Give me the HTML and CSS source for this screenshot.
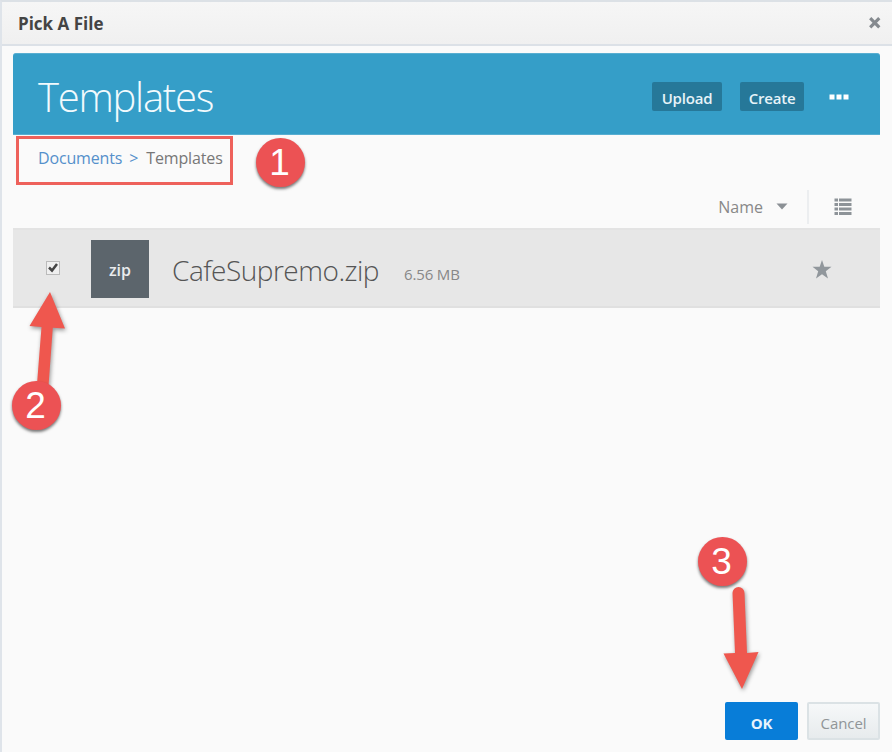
FILE: index.html
```html
<!DOCTYPE html>
<html lang="en">
<head>
<meta charset="utf-8">
<title>Pick A File</title>
<link rel="stylesheet" href="styles.css">
</head>
<body>
<div class="dialog">
  <header class="titlebar">
    <h1 class="title"><span>Pick A File</span></h1>
    <svg class="close" width="14" height="14" viewBox="0 0 14 14"><path d="M2.2 2.2 11.3 11.3M11.3 2.2 2.2 11.3"/></svg>
  </header>
  <main class="content">
    <section class="banner">
      <h2 class="heading"><span>Templates</span></h2>
      <button class="action upload"><span>Upload</span></button>
      <button class="action create"><span>Create</span></button>
      <svg class="more" width="20" height="6" viewBox="0 0 20 6"><path d="M.5.5h5v5h-5zM7.5.5h5v5h-5zM14.500.5h5v5h-5z"/></svg>
    </section>
    <nav class="crumbs"><a class="link"><span>Documents</span></a><span class="sep">&gt;</span><span class="current">Templates</span></nav>
    <div class="tools">
      <span class="sort">Name</span>
      <svg class="caret" width="12" height="7" viewBox="0 0 12 7"><path d="M.5.5h11L6 6.500z"/></svg>
      <span class="divider"></span>
      <svg class="list" width="18" height="18" viewBox="0 0 18 18"><path d="M.5 2H4M5 2h12.500M.5 6.500H4M5 6.500h12.500M.5 11H4M5 11h12.500M.5 15.500H4M5 15.500h12.500"/></svg>
    </div>
    <div class="row">
      <svg class="check" width="14" height="14" viewBox="0 0 14 14"><rect x=".5" y=".5" width="13" height="13"/><path d="M3 6.500 6 9.500 11 3"/></svg>
      <div class="thumb"><span>zip</span></div>
      <span class="name">CafeSupremo.zip</span>
      <span class="size">6.56 MB</span>
      <svg class="star" width="20" height="19" viewBox="0 0 20 19"><path d="M10 0l2.300 6.800H19.500l-5.700 4.400 2.200 7.300L10 14.200 4 18.500l2.200-7.300L.5 6.800h7.200z"/></svg>
    </div>
  </main>
  <footer class="footer">
    <button class="btn ok"><span>OK</span></button>
    <button class="btn cancel"><span>Cancel</span></button>
  </footer>
</div>
<div class="frame"></div>
<svg class="arrow" width="892" height="752" viewBox="0 0 892 752">
  <path d="M50 292 65 328.500 52.800 327.800 48.500 386 37 384 41.500 327 29.500 326z"/>
  <path d="M732.500 593a6 6 0 0 1 12 0L747 653l11.500-1L742 689 723.500 653.500 735 653z"/>
</svg>
<div class="badge one">1</div>
<div class="badge two">2</div>
<div class="badge three">3</div>
</body>
</html>
```

FILE: styles.css
```css
* { box-sizing: border-box; }
body { margin: 0; width: 892px; height: 752px; overflow: hidden; font-family: "Open Sans", "Noto Sans", sans-serif; background: #fafafa; }
h1, h2 { margin: 0; }
button { border: 0; padding: 0; font-family: inherit; }
span { white-space: nowrap; }
.dialog { height: 752px; display: flex; flex-direction: column; border-left: 2px solid #dfe4ea; border-top: 2px solid #dce1e6; }
.titlebar { height: 44px; display: flex; align-items: center; justify-content: space-between; padding: 0 10px 0 16px; background: linear-gradient(#f6f6f6, #f0f0f0); border-bottom: 2px solid #dce1e7; }
.title { font-size: 17px; line-height: 20px; font-weight: 700; color: #444; padding-top: 2px; }
.close { stroke: #858a8f; stroke-width: 3.200; }
.content { flex: 1; padding: 7px 12px 0 11px; }
.banner { height: 82px; display: flex; align-items: center; background: #359ec8; border-radius: 3px 3px 0 0; padding: 0 31px 0 25px; border: 1px solid #58aed1; border-left-width: 0; border-right-width: 0; }
.heading { flex: 1; font-size: 40px; letter-spacing: -1.250px; line-height: 50px; font-weight: 300; color: #f2fafd; padding-top: 5px; }
.action { height: 29px; padding-top: 3px; margin-top: 5px; border-radius: 2px; background: #267899; color: #e6f3f8; font-size: 15px; letter-spacing: -.2px; line-height: 20px; font-weight: 600; }
.upload { width: 70px; margin-right: 18px; }
.create { width: 64px; margin-right: 25px; }
.more { fill: #fff; margin-top: 5px; }
.crumbs { height: 50px; padding: 12px 0 0 25px; display: flex; font-size: 16px; letter-spacing: -.15px; line-height: 22px; color: #777; }
.link, .sep { color: #5590cb; }
.sep { margin: 0 8px 0 7px; }
.tools { height: 43px; display: flex; align-items: center; justify-content: flex-end; padding-right: 28px; color: #888; font-size: 16px; line-height: 22px; }
.sort { margin-right: 13px; padding-top: 1px; }
.caret { fill: #8b9095; margin-right: 19px; }
.divider { width: 2px; height: 34px; background: #eceef0; margin-right: 25px; }
.list { stroke: #8d9398; stroke-width: 2.800; fill: none; }
.row { height: 80px; display: flex; align-items: center; padding: 2px 48px 0 33px; background: #e7e7e7; border-top: 2px solid #e3e3e3; border-bottom: 2px solid #e0e0e0; }
.check { fill: #efefef; stroke: #bbb; margin: 0 31px 3px 0; }
.check path { fill: none; stroke: #444; stroke-width: 2.500; }
.thumb { width: 58px; height: 58px; background: #5c656c; color: #e9ebed; font-size: 16px; font-weight: 600; line-height: 60px; text-align: center; margin-right: 23px; }
.name { font-size: 28px; letter-spacing: -.5px; font-weight: 300; line-height: 40px; color: #555; margin-top: 2px; }
.size { flex: 1; font-size: 15px; letter-spacing: -.15px; line-height: 20px; color: #888; margin: 9px 0 0 25px; }
.star { fill: #91979c; margin-top: 1px; }
.footer { display: flex; justify-content: flex-end; gap: 9px; padding: 0 12px 12px 0; }
.btn { height: 38px; font-size: 15px; letter-spacing: -.1px; line-height: 20px; border-radius: 2px; padding-top: 4px; }
.ok { width: 73px; background: #087dd8; color: #e7f3fc; font-weight: 700; }
.cancel { width: 73px; background: linear-gradient(#f6f8f9, #e7ebed); border: 2px solid #dbe2e5; color: #909598; }
.frame { position: absolute; left: 16px; top: 136px; width: 217px; height: 49px; border: 3px solid #ee615b; }
.arrow { position: absolute; left: 0; top: 0; fill: #ef574e; filter: drop-shadow(1px 2px 2px #0006); }
.badge { position: absolute; width: 49px; height: 49px; border-radius: 50%; background: #ec5254; color: #fff; font: 37px/49px "Liberation Sans", sans-serif; text-align: center; padding-right: 2px; box-shadow: 0 2px 3px #0008; }
.one { left: 256px; top: 138px; }
.two { left: 12px; top: 381px; }
.three { left: 698px; top: 537px; }
```
